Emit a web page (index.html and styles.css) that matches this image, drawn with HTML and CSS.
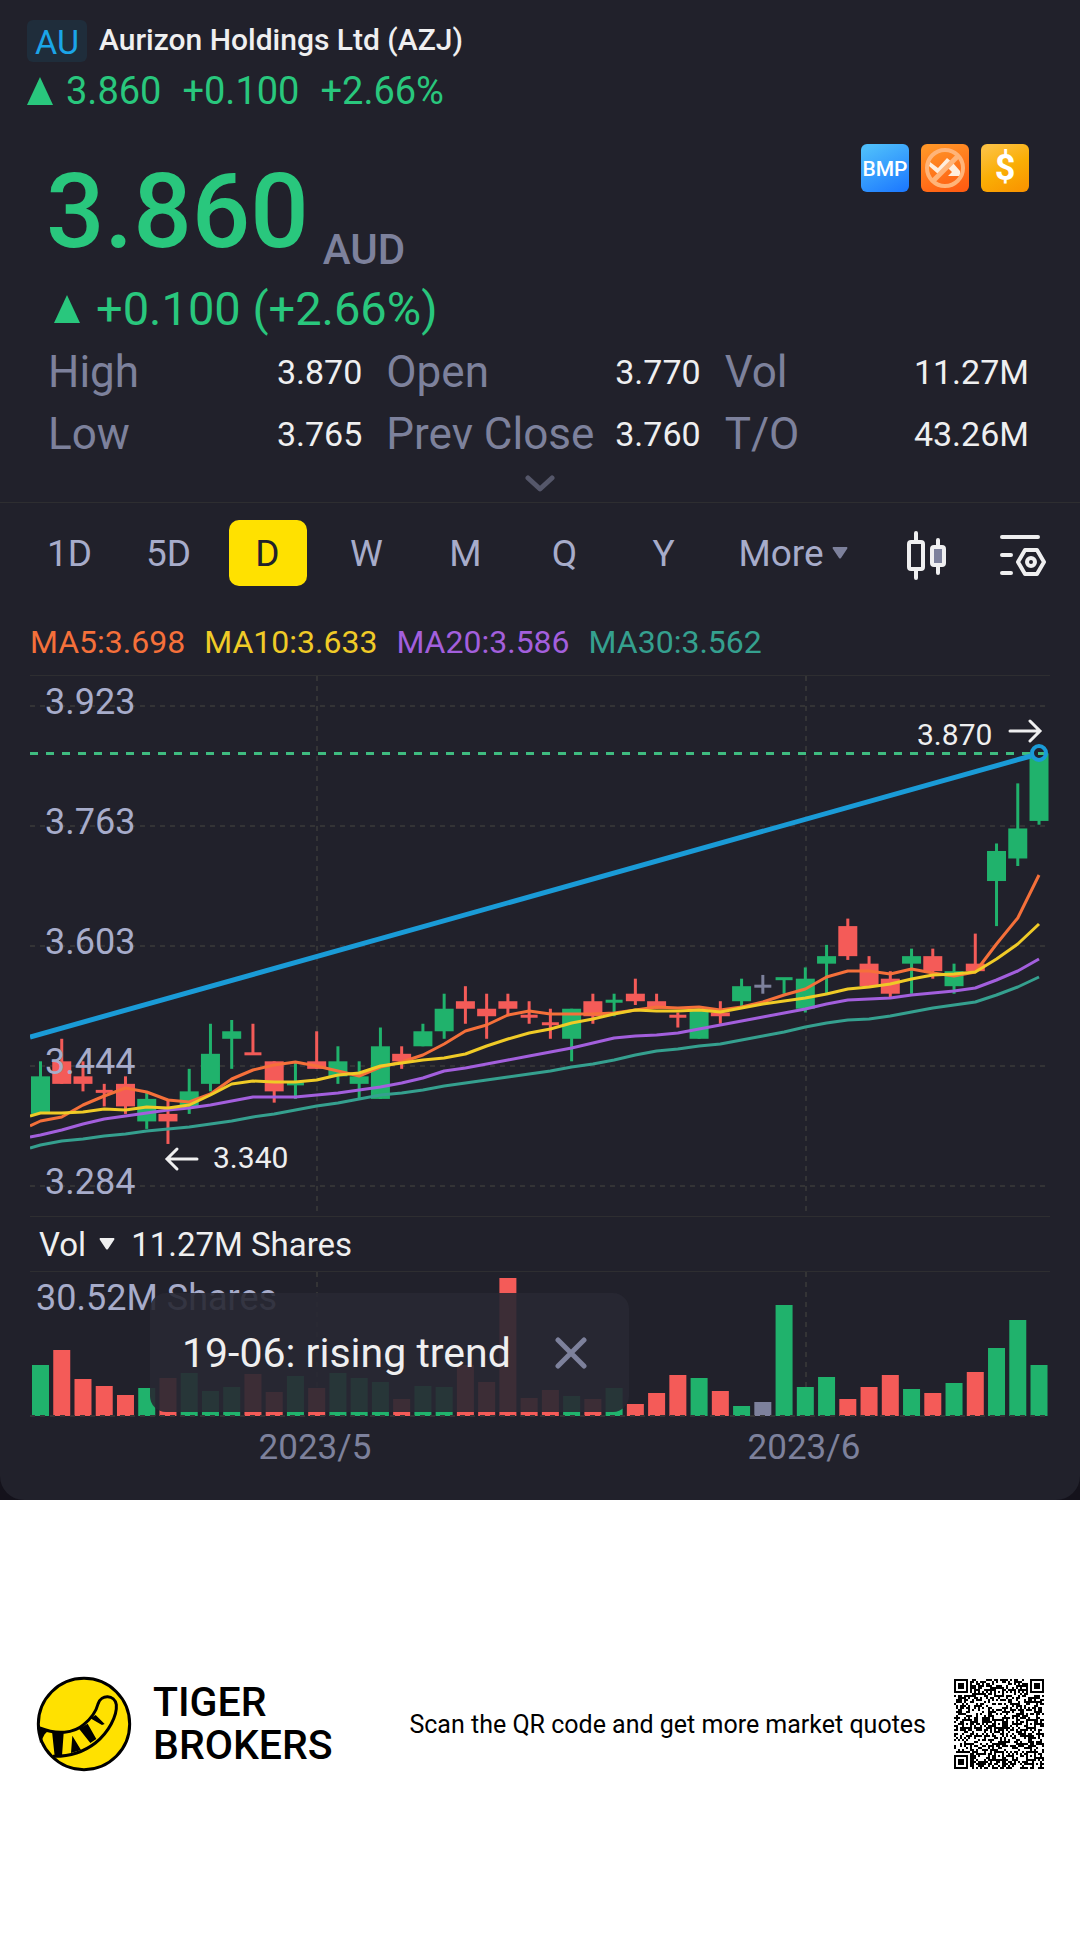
FILE: index.html
```html
<!DOCTYPE html>
<html lang="en">

<head>
	<meta charset="UTF-8">
	<meta name="viewport" content="width=device-width, initial-scale=1">
	<title>Aurizon Holdings Ltd (AZJ)</title>
	<link rel="stylesheet" href="styles.css">
</head>

<body>
	<div class="backdrop">
		<main class="card">
			<header class="header">
				<div class="title-row">
					<span class="market">AU</span>
					<h1 class="title">Aurizon Holdings Ltd (AZJ)</h1>
				</div>
				<div class="mini-quote">
					<svg class="up" viewBox="0 0 26 28"><path d="M13 0 26 28H0z" /></svg>
					<span>3.860</span>
					<span>+0.100</span>
					<span>+2.66%</span>
				</div>
			</header>

			<section class="quote">
				<div class="price-row">
					<span class="price">3.860</span>
					<span class="currency">AUD</span>
					<div class="badges">
						<svg viewBox="0 0 48 48">
							<defs>
								<linearGradient id="blue" x1="0.3" y1="0" x2="0.8" y2="1">
									<stop offset="0" stop-color="#4dbdfb" />
									<stop offset="1" stop-color="#1e7bff" />
								</linearGradient>
							</defs>
							<rect width="48" height="48" rx="6" fill="url(#blue)" />
							<text x="24" y="32" class="badge-bmp">BMP</text>
						</svg>
						<svg viewBox="0 0 48 48">
							<defs>
								<linearGradient id="orange" x1="0.3" y1="0" x2="0.7" y2="1">
									<stop offset="0" stop-color="#ff9527" />
									<stop offset="1" stop-color="#ff5d12" />
								</linearGradient>
							</defs>
							<rect width="48" height="48" rx="6" fill="url(#orange)" />
							<path d="M9 18l8 6 9-10 6 5 7 8 0 5H27l4-4-6-6-8 8L8 22z" fill="#ffeedd" />
							<circle cx="24" cy="24" r="18" fill="none" stroke="#ffb478" stroke-width="4" />
							<path d="M12 37 37 12" stroke="#ffb478" stroke-width="5" />
						</svg>
						<svg viewBox="0 0 48 48">
							<defs>
								<linearGradient id="gold" x1="0.3" y1="0" x2="0.8" y2="1">
									<stop offset="0" stop-color="#fcc040" />
									<stop offset="0.5" stop-color="#faae05" />
									<stop offset="1" stop-color="#f99500" />
								</linearGradient>
							</defs>
							<rect width="48" height="48" rx="6" fill="url(#gold)" />
							<text x="24" y="36" class="badge-usd">$</text>
						</svg>
					</div>
				</div>
				<div class="change">
					<svg class="up" viewBox="0 0 26 28"><path d="M13 0 26 28H0z" /></svg>
					<span>+0.100 (+2.66%)</span>
				</div>
				<dl class="stats">
					<div><dt>High</dt><dd>3.870</dd></div>
					<div><dt>Open</dt><dd>3.770</dd></div>
					<div><dt>Vol</dt><dd>11.27M</dd></div>
					<div><dt>Low</dt><dd>3.765</dd></div>
					<div><dt>Prev Close</dt><dd>3.760</dd></div>
					<div><dt>T/O</dt><dd>43.26M</dd></div>
				</dl>
				<button class="expand" aria-label="Show more">
					<svg viewBox="0 0 30 18"><path d="M3 3l12 11L27 3" /></svg>
				</button>
			</section>

			<nav class="tabs">
				<button>1D</button>
				<button>5D</button>
				<button class="active">D</button>
				<button>W</button>
				<button>M</button>
				<button>Q</button>
				<button>Y</button>
				<button class="more">More
					<svg class="down" viewBox="0 0 16 12"><path d="M1 0h14q1 1 0 2L9 11q-1 1-2 0L1 2q-1-1 0-2z" /></svg>
				</button>
				<button class="icon" aria-label="Chart type">
					<svg width="40" height="50" viewBox="0 0 40 50">
						<g fill="none" stroke="#efeff0" stroke-width="4" stroke-linecap="round">
							<rect x="2" y="11" width="14" height="27" rx="2" />
							<path d="M9 2v8M9 39v8" />
							<rect x="25" y="16" width="12" height="18" rx="2" fill="#7d819c" />
							<path d="M31 9v6M31 35v7" />
						</g>
					</svg>
				</button>
				<button class="icon" aria-label="Chart settings">
					<svg width="48" height="44" viewBox="0 0 48 44">
						<g fill="none" stroke="#efeff0" stroke-width="4" stroke-linecap="round" stroke-linejoin="round">
							<path d="M3 3h36M3 21h9M3 39h9M26 16h12l7 12-7 12H26l-7-12z" />
							<circle cx="32" cy="28" r="4" />
						</g>
					</svg>
				</button>
			</nav>

			<div class="averages">
				<span class="ma5">MA5:3.698</span>
				<span class="ma10">MA10:3.633</span>
				<span class="ma20">MA20:3.586</span>
				<span class="ma30">MA30:3.562</span>
			</div>

			<section class="chart">
				<svg class="plot" id="price-plot" viewBox="30 676 1020 540"></svg>
				<div class="volume-head">
					<button>Vol
						<svg class="down" viewBox="0 0 16 12"><path d="M1 0h14q1 1 0 2L9 11q-1 1-2 0L1 2q-1-1 0-2z" /></svg>
					</button>
					<span>11.27M Shares</span>
				</div>
				<div class="volume">
					<svg class="plot" id="volume-plot" viewBox="30 1272 1020 228"></svg>
					<div class="toast">
						<span>19-06: rising trend</span>
						<button aria-label="Close">
							<svg viewBox="0 0 32 32"><path d="M3 3l26 26M29 3 3 29" /></svg>
						</button>
					</div>
				</div>
			</section>
		</main>
	</div>

	<footer class="footer">
		<svg class="logo" viewBox="0 0 288 288">
			<circle cx="144" cy="144" r="137" fill="#ffe100" stroke="#000" stroke-width="9" />
			<g transform="translate(-107 -106)">
				<path d="M118 262C170 283 220 278 250 252 275 231 288 210 293 190 302 160 343 162 348 192 351 225 325 275 285 307 250 334 205 348 158 347" fill="none" stroke="#000" stroke-width="9" />
				<path d="M114 256l28 16-9 9-14 27zM155 272l35 5-5 68-22 2zM216 285l26 43-30 9zM236 264l26-15 26 46-18 12zM270 233l16-10 27 27-8 3z" />
			</g>
		</svg>
		<div class="brand">TIGER<br>BROKERS</div>
		<p class="scan">Scan the QR code and get more market quotes</p>
		<svg class="qr" id="qr" viewBox="0 0 45 45" shape-rendering="crispEdges"></svg>
	</footer>

	<script src="chart.js"></script>
</body>

</html>
```
FILE: styles.css
```css
* {
	box-sizing: border-box;
}

body {
	margin: 0;
	background: #fff;
	font-family: Roboto, "Noto Sans", sans-serif;
	color: #efeff0;
}

button {
	border: none;
	padding: 0;
	background: none;
	font: inherit;
	color: inherit;
	cursor: pointer;
}

.backdrop {
	background: #14121b;
}

.card {
	background: #21212b;
	border-radius: 0 0 24px 24px;
	overflow: hidden;
}

.header {
	padding: 20px 27px 0;
}

.title-row {
	display: flex;
	gap: 12px;
}

.market {
	width: 60px;
	height: 42px;
	border-radius: 6px;
	background: #1f2d3b;
	color: #1ba5e8;
	font-size: 34px;
	line-height: 44px;
	text-align: center;
}

.title {
	margin: 0;
	font-size: 30px;
	font-weight: 500;
	line-height: 40px;
}

.mini-quote {
	display: flex;
	align-items: center;
	gap: 21px;
	margin-top: 7px;
	font-size: 38px;
	line-height: 44px;
	color: #29c77d;
}

.up {
	width: 26px;
	height: 28px;
	fill: #29c77d;
}

.mini-quote .up {
	margin-right: -8px;
}

.quote {
	padding-top: 31px;
	border-bottom: 1px solid #2e2e31;
}

.price-row {
	display: flex;
	align-items: flex-end;
	padding: 0 51px 0 46px;
}

.price {
	margin-top: 8px;
	font-size: 103px;
	font-weight: 500;
	line-height: 120px;
	color: #29c77d;
}

.currency {
	margin-left: 14px;
	font-size: 42px;
	font-weight: 500;
	line-height: 44px;
	color: #7d819c;
}

.badges {
	display: flex;
	gap: 12px;
	align-self: flex-start;
	margin-left: auto;
}

.badges svg {
	width: 48px;
	height: 48px;
}

.badges text {
	fill: #fff;
	text-anchor: middle;
}

.badge-bmp {
	font-size: 21px;
	font-weight: 500;
}

.badge-usd {
	font-size: 36px;
	font-weight: 700;
}

.change {
	display: flex;
	align-items: center;
	gap: 16px;
	margin-top: 9px;
	padding-left: 54px;
	font-size: 47px;
	line-height: 56px;
	color: #29c77d;
}

.stats {
	display: grid;
	grid-template-columns: 314fr 314fr 304fr;
	column-gap: 24px;
	margin: 4px 0 0;
	padding: 0 51px 0 48px;
}

.stats div {
	display: flex;
	align-items: center;
	justify-content: space-between;
	line-height: 62px;
	white-space: nowrap;
}

.stats dt {
	font-size: 44px;
	color: #7d819c;
}

.stats dd {
	margin: 0;
	font-size: 34px;
}

.expand {
	display: flex;
	align-items: center;
	justify-content: center;
	width: 100%;
	height: 37px;
}

.expand svg {
	width: 30px;
	height: 18px;
	fill: none;
	stroke: #55576a;
	stroke-width: 5;
	stroke-linecap: round;
	stroke-linejoin: round;
}

.tabs {
	display: grid;
	grid-template-columns: repeat(7, 99fr) 160fr 107fr 86fr;
	align-items: center;
	justify-items: center;
	padding: 17px 14px 0 20px;
	font-size: 37px;
	color: #a7acca;
}

.tabs button {
	width: 78px;
	height: 66px;
	border-radius: 10px;
}

.tabs .active {
	background: #ffe100;
	color: #21212b;
}

.tabs .more {
	display: flex;
	align-items: center;
	justify-content: center;
	gap: 8px;
	width: auto;
}

.tabs .icon {
	display: flex;
	align-items: center;
	justify-content: center;
	padding-top: 6px;
}

.down {
	width: 16px;
	height: 12px;
	fill: currentColor;
}

.more .down {
	fill: #7d819c;
}

.averages {
	display: flex;
	gap: 19px;
	padding: 36px 30px 13px;
	font-size: 32px;
	line-height: 40px;
}

.ma5 {
	color: #f5703a;
}

.ma10 {
	color: #f0cb27;
}

.ma20 {
	color: #a35fdd;
}

.ma30 {
	color: #35a08f;
}

.chart {
	margin: 0 30px;
	border-top: 1px solid #2e2e31;
}

.plot {
	display: block;
	width: 100%;
	height: auto;
}

.volume-head {
	display: flex;
	align-items: center;
	gap: 16px;
	height: 56px;
	padding-left: 9px;
	border-top: 1px solid #2e2e31;
	border-bottom: 1px solid #2e2e31;
	font-size: 33px;
}

.volume-head button {
	display: flex;
	align-items: center;
	gap: 13px;
}

.volume {
	position: relative;
}

.toast {
	position: absolute;
	top: 21px;
	left: 120px;
	display: flex;
	align-items: center;
	gap: 44px;
	height: 119px;
	padding: 0 42px 0 32px;
	border-radius: 16px;
	background: rgba(40, 40, 51, 0.9);
	font-size: 41px;
	white-space: nowrap;
}

.toast svg {
	display: block;
	width: 32px;
	height: 32px;
	stroke: #7d819c;
	stroke-width: 5;
	stroke-linecap: round;
}

/* plot parts */
.grid {
	stroke: #343436;
	stroke-width: 2;
	stroke-dasharray: 5 5;
}

.last-price {
	stroke: #3fbc80;
	stroke-width: 3;
	stroke-dasharray: 8 8;
}

.u {
	fill: #20b26c;
}

.d {
	fill: #f45b58;
}

.f {
	fill: #7d819c;
}

.line {
	fill: none;
	stroke: currentColor;
	stroke-width: 3;
	stroke-linejoin: round;
}

.trend {
	stroke: #1a9bd7;
	stroke-width: 5;
}

.trend-hole {
	fill: #21212b;
}

.trend-end {
	fill: none;
	stroke: #1a9bd7;
	stroke-width: 4;
}

.axis {
	font-size: 36px;
	fill: #a7acca;
}

.date {
	font-size: 35px;
	fill: #7d819c;
	text-anchor: middle;
}

.mark {
	font-size: 30px;
	fill: #efeff0;
}

.arrow {
	fill: none;
	stroke: #efeff0;
	stroke-width: 3;
	stroke-linecap: round;
}

.footer {
	display: flex;
	align-items: center;
	padding: 176px 36px;
	color: #000;
}

.logo {
	width: 96px;
	height: 96px;
}

.brand {
	margin-left: 21px;
	font-size: 41px;
	font-weight: 500;
	line-height: 43px;
}

.scan {
	margin: 0 28px 0 auto;
	font-size: 25px;
}

.qr {
	width: 90px;
	height: 90px;
}
```
FILE: chart.js
```js
// direction, open/close top, open/close bottom, high, low, volume
const candles = [
	['u', 3.43, 3.38, 3.45, 3.38, 51], ['d', 3.45, 3.42, 3.48, 3.42, 66], ['d', 3.43, 3.42, 3.45, 3.41, 37],
	['d', 3.41, 3.41, 3.42, 3.39, 30], ['d', 3.42, 3.39, 3.43, 3.38, 21], ['u', 3.40, 3.37, 3.41, 3.36, 28],
	['d', 3.38, 3.37, 3.40, 3.34, 38], ['u', 3.41, 3.39, 3.44, 3.38, 43], ['u', 3.46, 3.42, 3.50, 3.41, 25],
	['u', 3.49, 3.48, 3.505, 3.44, 29], ['d', 3.46, 3.46, 3.50, 3.46, 42], ['d', 3.45, 3.41, 3.45, 3.395, 24],
	['u', 3.42, 3.42, 3.45, 3.40, 40], ['d', 3.45, 3.44, 3.49, 3.44, 28], ['u', 3.45, 3.43, 3.47, 3.42, 43],
	['u', 3.43, 3.42, 3.45, 3.40, 38], ['u', 3.47, 3.40, 3.495, 3.40, 34], ['d', 3.46, 3.45, 3.47, 3.44, 17],
	['u', 3.49, 3.47, 3.50, 3.47, 30], ['u', 3.52, 3.49, 3.54, 3.48, 29], ['d', 3.53, 3.52, 3.55, 3.50, 51],
	['d', 3.52, 3.51, 3.54, 3.48, 34], ['d', 3.53, 3.52, 3.54, 3.51, 138], ['d', 3.51, 3.51, 3.53, 3.50, 18],
	['d', 3.50, 3.50, 3.52, 3.48, 26], ['u', 3.52, 3.48, 3.52, 3.45, 20], ['d', 3.53, 3.51, 3.54, 3.50, 17],
	['u', 3.53, 3.53, 3.54, 3.51, 28], ['d', 3.54, 3.53, 3.56, 3.525, 12], ['d', 3.53, 3.52, 3.54, 3.52, 23],
	['d', 3.51, 3.51, 3.515, 3.495, 41], ['u', 3.52, 3.48, 3.52, 3.48, 38], ['d', 3.515, 3.51, 3.53, 3.50, 25],
	['u', 3.55, 3.53, 3.56, 3.52, 10], ['f', 3.55, 3.55, 3.565, 3.54, 14], ['u', 3.56, 3.56, 3.56, 3.54, 111],
	['u', 3.56, 3.52, 3.575, 3.515, 29], ['u', 3.59, 3.58, 3.605, 3.54, 39], ['d', 3.63, 3.59, 3.64, 3.585, 17],
	['d', 3.58, 3.55, 3.59, 3.55, 29], ['d', 3.56, 3.54, 3.57, 3.535, 41], ['u', 3.59, 3.58, 3.60, 3.54, 27],
	['d', 3.59, 3.57, 3.60, 3.56, 23], ['u', 3.57, 3.55, 3.58, 3.54, 33], ['d', 3.58, 3.57, 3.62, 3.57, 44],
	['u', 3.73, 3.69, 3.74, 3.63, 68], ['u', 3.76, 3.72, 3.82, 3.71, 96], ['u', 3.86, 3.77, 3.87, 3.765, 51]
]

// first value sits on the left edge of the plot, the rest on the candles
const averages = {
	ma30: [1148, 1145, 1141, 1139, 1136, 1134, 1131, 1129, 1127, 1124, 1121, 1117, 1114, 1110, 1106, 1103, 1099, 1095, 1093, 1090, 1086, 1083, 1080, 1077, 1074, 1071, 1067, 1064, 1060, 1055, 1051, 1049, 1046, 1044, 1040, 1036, 1032, 1027, 1023, 1020, 1019, 1016, 1012, 1008, 1005, 1002, 995, 987, 977],
	ma20: [1137, 1135, 1130, 1124, 1119, 1116, 1113, 1110, 1108, 1105, 1101, 1097, 1097, 1097, 1095, 1093, 1090, 1087, 1083, 1078, 1071, 1068, 1064, 1060, 1056, 1052, 1048, 1043, 1038, 1036, 1035, 1033, 1029, 1025, 1021, 1017, 1013, 1009, 1004, 1000, 999, 998, 995, 993, 991, 988, 980, 971, 959],
	ma5: [1126, 1121, 1117, 1105, 1096, 1088, 1092, 1100, 1102, 1094, 1079, 1070, 1065, 1062, 1066, 1071, 1076, 1067, 1062, 1055, 1044, 1031, 1025, 1015, 1011, 1014, 1014, 1014, 1013, 1010, 1007, 1008, 1007, 1010, 1007, 1002, 995, 989, 977, 971, 971, 974, 969, 973, 976, 972, 944, 918, 875],
	ma10: [1116, 1113, 1113, 1112, 1109, 1110, 1107, 1108, 1105, 1095, 1084, 1081, 1082, 1082, 1080, 1075, 1073, 1066, 1063, 1060, 1058, 1054, 1046, 1039, 1033, 1029, 1023, 1019, 1014, 1010, 1011, 1011, 1010, 1012, 1008, 1004, 1001, 998, 994, 989, 987, 984, 979, 975, 974, 972, 959, 944, 924]
}

const left = 30
const right = 1050
const base = 1416
const months = [[317, '2023/5'], [806, '2023/6']]
const centerX = i => 40.5 + i * 21.245
const priceY = p => 706 + (3.923 - p) * 751.2
const rect = (cls, x, y, w, h) => `<rect class="${cls}" x="${x}" y="${y}" width="${w}" height="${h}"/>`
const hline = (cls, y) => `<path class="${cls}" d="M${left} ${y}H${right}"/>`

function drawPrice() {
	const levels = [3.923, 3.763, 3.603, 3.444, 3.284]
	let out = ''
	levels.forEach((p, i) => out += hline('grid', 706 + i * 120))
	months.forEach(m => out += `<path class="grid" d="M${m[0]} 676V1216"/>`)

	candles.forEach(([dir, top, bottom, high, low], i) => {
		const x = centerX(i)
		const y = priceY(top)
		out += rect(dir, x - 1.5, priceY(high), 3, priceY(low) - priceY(high))
		if (top === bottom) {
			out += rect(dir, x - 8.5, y - 1.5, 17, 3)
		} else {
			out += rect(dir, x - 9.5, y, 19, priceY(bottom) - y)
		}
	})

	for (const name in averages) {
		const points = averages[name].map((y, i) => `${i ? centerX(i - 1) : left},${y}`)
		out += `<polyline class="line ${name}" points="${points.join(' ')}"/>`
	}

	out += '<circle cx="1039" cy="753" r="7" class="trend-hole"/>'
	out += hline('last-price', 753.5)
	out += '<path class="trend" d="M30 1037 1031 756"/><circle cx="1039" cy="753" r="7" class="trend-end"/>'
	levels.forEach((p, i) => out += `<text class="axis" x="45" y="${714 + i * 120}">${p.toFixed(3)}</text>`)
	out += '<text class="mark" x="917" y="745">3.870</text><path class="arrow" d="M1010 731h29m-9-10 10 10-10 10"/>'
	out += '<text class="mark" x="213" y="1168">3.340</text><path class="arrow" d="M197 1159h-29m9-10-10 10 10 10"/>'
	document.getElementById('price-plot').innerHTML = out
}

function drawVolume() {
	let out = ''
	months.forEach(m => out += `<path class="grid" d="M${m[0]} 1272V${base}"/>`)
	out += '<text class="axis" x="36" y="1310">30.52M Shares</text>'
	candles.forEach((c, i) => out += rect(c[0], centerX(i) - 8.5, base - c[5], 17, c[5]))
	out += hline('grid', base)
	months.forEach(m => out += `<text class="date" x="${m[0] - 2}" y="1459">${m[1]}</text>`)
	document.getElementById('volume-plot').innerHTML = out
}

function drawQr() {
	const n = 45
	let seed = 7
	let d = ''
	// ring pattern: distance from the centre decides the colour
	const ring = (x, y, cx, cy) => Math.max(Math.abs(x - cx), Math.abs(y - cy))
	const finders = [[3, 3], [41, 3], [3, 41]]
	const aligns = [[22, 6], [6, 22], [22, 22], [38, 22], [22, 38], [38, 38]]
	for (let y = 0; y < n; y++) {
		for (let x = 0; x < n; x++) {
			seed = (seed * 1103515245 + 12345) % 2147483648
			let on = (seed >> 12) % 100 < 50
			if (x === 6 || y === 6) on = (x + y) % 2 === 0
			aligns.forEach(([cx, cy]) => {
				const r = ring(x, y, cx, cy)
				if (r < 3) on = r !== 1
			})
			finders.forEach(([cx, cy]) => {
				const r = ring(x, y, cx, cy)
				if (r < 5) on = r < 2 || r === 3
			})
			if (on) d += `M${x} ${y}h1v1h-1z`
		}
	}
	document.getElementById('qr').innerHTML = `<path d="${d}"/>`
}

drawPrice()
drawVolume()
drawQr()
```
